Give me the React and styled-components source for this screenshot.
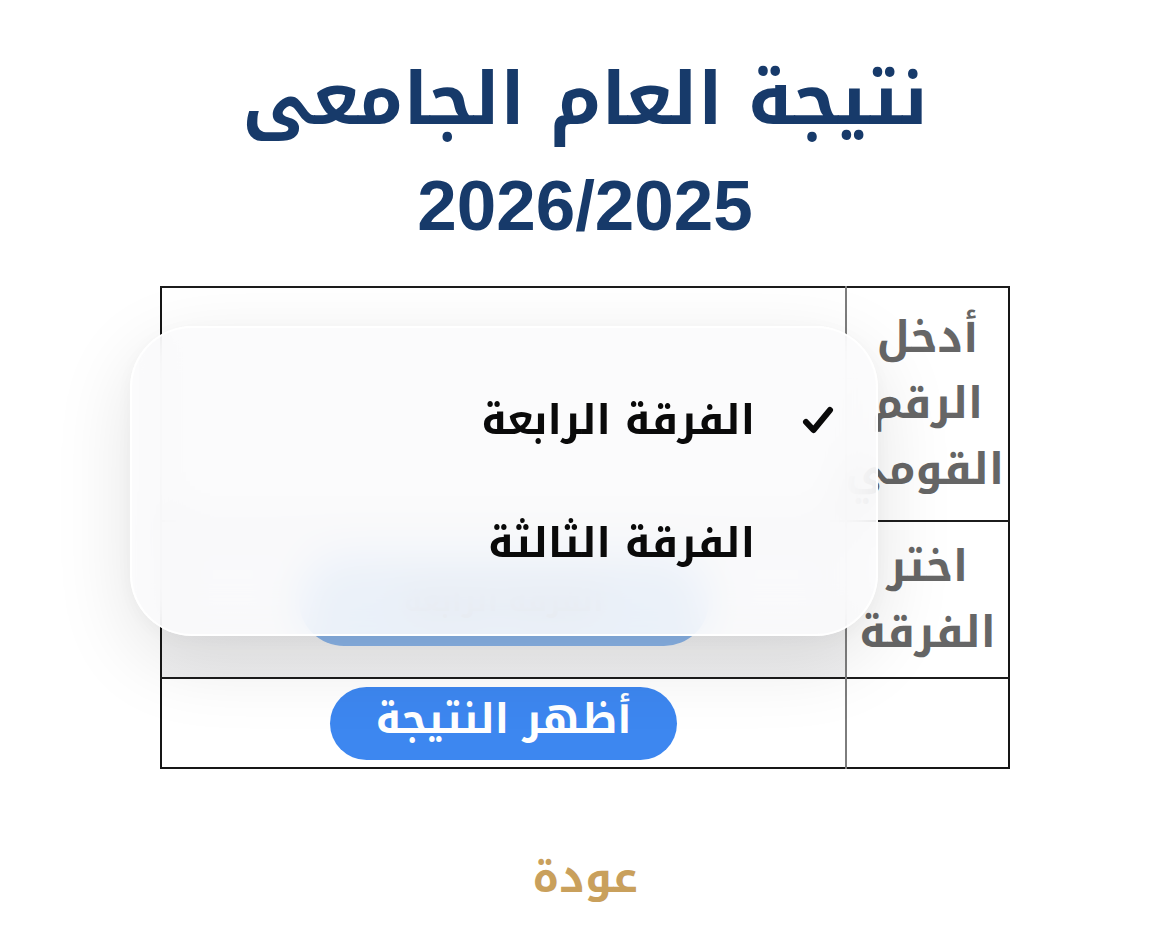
import React from "react";
import styled, { createGlobalStyle } from "styled-components";

const Global = createGlobalStyle`
  html, body { margin: 0; padding: 0; background: #ffffff; }
  body { font-family: "Noto Kufi Arabic", "Noto Sans Arabic", "Noto Sans", "DejaVu Sans", sans-serif; }
`;

const ARABIC = `"Noto Kufi Arabic", "Noto Sans Arabic", "Noto Sans", "DejaVu Sans", sans-serif`;

const Page = styled.div`
  direction: rtl;
  display: flex;
  flex-direction: column;
  align-items: center;
  padding-top: 44px;
  min-height: 939px;
  box-sizing: border-box;
`;

const Title = styled.h1`
  margin: 0;
  font-family: ${ARABIC};
  font-weight: 700;
  font-size: 72px;
  line-height: 112px;
  color: #173a6a;
`;

const Year = styled.div`
  font-family: "Liberation Sans", Arial, sans-serif;
  font-weight: 700;
  font-size: 71px;
  line-height: 84px;
  color: #173a6a;
  direction: ltr;
  margin-top: 8px;
`;

const TableWrap = styled.div`
  position: relative;
  margin-top: 38px;
  width: 850px;
`;

const Table = styled.table`
  width: 850px;
  border-collapse: collapse;
  table-layout: fixed;
  border: 2px solid #161616;
`;

const Row = styled.tr`
  height: ${(p) => p.$h}px;
`;

const LabelCell = styled.td`
  width: 153px;
  border: 1px solid #8a8a8a;
  border-top: 2px solid #1c1c1c;
  border-left: 2px solid #7d7d7d;
  text-align: center;
  vertical-align: middle;
  padding: 0 4px;
  font-family: ${ARABIC};
  font-weight: 700;
  font-size: 43px;
  line-height: 66px;
  color: #666666;
  overflow: visible;
`;

const FieldCell = styled.td`
  border: 1px solid #8a8a8a;
  border-top: 2px solid #1c1c1c;
  text-align: center;
  vertical-align: middle;
  background: ${(p) => (p.$shade ? "linear-gradient(#f5f5f6, #efeff0)" : "transparent")};
`;

const Word = styled.span`
  display: block;
  white-space: nowrap;
`;

const SelectPill = styled.div`
  display: inline-flex;
  align-items: center;
  justify-content: center;
  width: 410px;
  height: 90px;
  margin-top: 2px;
  border-radius: 45px;
  background: #8ab4e8;
  font-family: ${ARABIC};
  font-weight: 700;
  font-size: 30px;
  color: #555;
`;

const ShowButton = styled.button`
  width: 347px;
  height: 73px;
  border: none;
  border-radius: 37px;
  background: #3d87f0;
  color: #ffffff;
  font-family: ${ARABIC};
  font-weight: 700;
  font-size: 41px;
  line-height: 1;
  cursor: pointer;
  padding: 0 0 8px;
  white-space: nowrap;
`;

const Popup = styled.div`
  position: absolute;
  left: -30px;
  top: 40px;
  width: 748px;
  height: 310px;
  box-sizing: border-box;
  padding: 30px 0;
  border-radius: 62px;
  background: rgba(250, 250, 252, 0.86);
  backdrop-filter: blur(22px);
  -webkit-backdrop-filter: blur(22px);
  border: 2px solid rgba(255, 255, 255, 0.95);
  box-shadow: 0 24px 80px rgba(0, 0, 0, 0.11), 0 4px 24px rgba(0, 0, 0, 0.04);
  display: flex;
  flex-direction: column;
`;

const Option = styled.div`
  height: 125px;
  display: flex;
  align-items: center;
  gap: 46px;
  padding-right: 41px;
  font-family: ${ARABIC};
  font-weight: 700;
  font-size: 41px;
  color: #0a0a0a;
`;

const CheckSlot = styled.span`
  width: 34px;
  height: 30px;
  display: flex;
  align-items: center;
  justify-content: center;
`;

const Back = styled.a`
  margin-top: 68px;
  font-family: ${ARABIC};
  font-weight: 700;
  font-size: 43px;
  color: #c9a05c;
  text-decoration: none;
`;

const Check = () => (
  <svg width="34" height="30" viewBox="0 0 34 30">
    <path
      d="M5 17 L12.5 25 L29 5"
      fill="none"
      stroke="#0a0a0a"
      strokeWidth="6"
      strokeLinecap="round"
      strokeLinejoin="round"
    />
  </svg>
);

export default function App() {
  return (
    <>
      <Global />
      <Page>
        <Title>نتيجة العام الجامعى</Title>
        <Year>2026/2025</Year>
        <TableWrap>
          <Table>
            <tbody>
              <Row $h={234}>
                <LabelCell>
                  <Word>أدخل</Word>
                  <Word>الرقم</Word>
                  <Word>القومي</Word>
                </LabelCell>
                <FieldCell />
              </Row>
              <Row $h={157}>
                <LabelCell>
                  <Word>اختر</Word>
                  <Word>الفرقة</Word>
                </LabelCell>
                <FieldCell $shade>
                  <SelectPill>الفرقة الرابعة</SelectPill>
                </FieldCell>
              </Row>
              <Row $h={90}>
                <LabelCell />
                <FieldCell>
                  <ShowButton>أظهر النتيجة</ShowButton>
                </FieldCell>
              </Row>
            </tbody>
          </Table>
          <Popup>
            <Option>
              <CheckSlot>
                <Check />
              </CheckSlot>
              <span>الفرقة الرابعة</span>
            </Option>
            <Option>
              <CheckSlot />
              <span>الفرقة الثالثة</span>
            </Option>
          </Popup>
        </TableWrap>
        <Back href="#">عودة</Back>
      </Page>
    </>
  );
}
